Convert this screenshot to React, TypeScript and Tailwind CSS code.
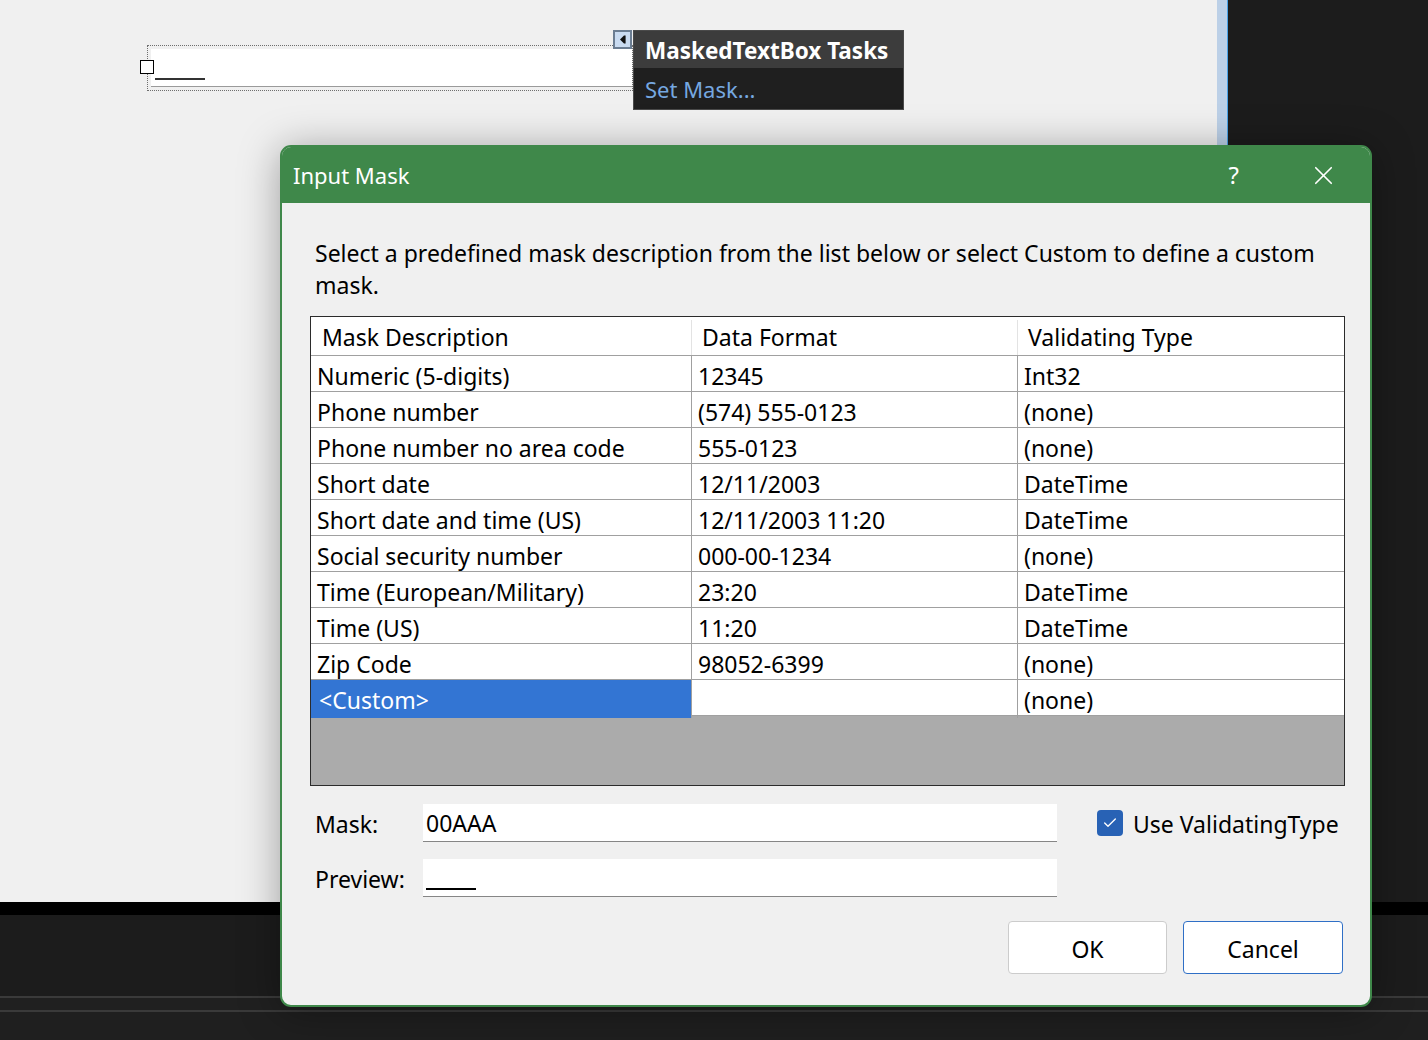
import { X, Check } from "lucide-react";

const font = { fontFamily: '"Noto Sans", "Open Sans", sans-serif' };

type Row = { desc: string; format: string; type: string; selected?: boolean };

const rows: Row[] = [
  { desc: "Numeric (5-digits)", format: "12345", type: "Int32" },
  { desc: "Phone number", format: "(574) 555-0123", type: "(none)" },
  { desc: "Phone number no area code", format: "555-0123", type: "(none)" },
  { desc: "Short date", format: "12/11/2003", type: "DateTime" },
  { desc: "Short date and time (US)", format: "12/11/2003 11:20", type: "DateTime" },
  { desc: "Social security number", format: "000-00-1234", type: "(none)" },
  { desc: "Time (European/Military)", format: "23:20", type: "DateTime" },
  { desc: "Time (US)", format: "11:20", type: "DateTime" },
  { desc: "Zip Code", format: "98052-6399", type: "(none)" },
  { desc: "<Custom>", format: "", type: "(none)", selected: true },
];

const SmartTagGlyph = () => (
  <svg width="19" height="19" viewBox="0 0 19 19">
    <rect x="1" y="1" width="17" height="17" fill="#c9dbf1" stroke="#6b7d92" strokeWidth="2" />
    <path d="M7 9.5 L11 5.5 L11 13.5 Z" fill="#111" />
    <rect x="11" y="5.5" width="1.6" height="8" fill="#111" />
  </svg>
);

const Designer = () => (
  <div className="relative w-[1217px] bg-[#f0f0f0]">
    {/* masked textbox control on the form */}
    <div className="absolute left-[147px] top-[45px] h-[46px] w-[486px] border border-dotted border-[#6e6e6e] py-[3px] pl-[3px]">
      <div className="flex h-full items-end border-b border-[#9a9a9a] bg-white pb-[6px] pl-[4px]">
        <div className="h-[2px] w-[50px] bg-[#333]" />
      </div>
    </div>
    <div className="absolute left-[140px] top-[60px] h-[14px] w-[14px] border border-black bg-white" />
    <div className="absolute left-[613px] top-[30px]">
      <SmartTagGlyph />
    </div>
    {/* smart tag panel */}
    <div
      className="absolute left-[633px] top-[30px] w-[271px] border border-[#4a4a4a] bg-[#1f1f1f]"
      style={font}
    >
      <div className="flex h-[37px] items-center bg-[#3c3c3c] pl-[11px] pt-[2px] text-[22.5px] font-bold text-white">
        MaskedTextBox Tasks
      </div>
      <div className="flex h-[41px] items-center pl-[11px] pt-[2px] text-[22px] text-[#76a8e0]">
        Set Mask...
      </div>
    </div>
  </div>
);

const Field = ({ label, children }: { label: string; children: React.ReactNode }) => (
  <div className="flex items-center">
    <span className="w-[113px] pl-[5px] pt-[2px] text-[23px] text-black">{label}</span>
    <div className="flex h-[38px] w-[634px] items-center border-b border-[#868686] bg-white pl-[3px] pt-[2px] text-[23px] text-black">
      {children}
    </div>
  </div>
);

const MaskTable = () => (
  <div className="flex h-[470px] flex-col border border-[#2b2b2b] bg-[#ababab] text-[23px] text-black">
    <div className="grid h-[39px] shrink-0 grid-cols-[381px_326px_1fr] border-b border-[#a0a0a0] bg-white pt-[3px]">
      <div className="flex items-center border-r border-[#e3e3e3] pl-[11px]">Mask Description</div>
      <div className="flex items-center border-r border-[#e3e3e3] pl-[10px]">Data Format</div>
      <div className="flex items-center pl-[10px]">Validating Type</div>
    </div>
    {rows.map((r) => (
      <div
        key={r.desc}
        className="grid h-[36px] shrink-0 grid-cols-[381px_326px_1fr] border-b border-[#a0a0a0] bg-white"
      >
        <div
          className={
            r.selected
              ? "flex items-center border-r border-[#a0a0a0] bg-[#3375d3] pl-[8px] pt-[3px] text-white"
              : "flex items-center border-r border-[#a0a0a0] pl-[6px] pt-[3px]"
          }
        >
          {r.desc}
        </div>
        <div className="flex items-center border-r border-[#a0a0a0] pl-[6px] pt-[3px]">{r.format}</div>
        <div className="flex items-center pl-[6px] pt-[3px]">{r.type}</div>
      </div>
    ))}
  </div>
);

const InputMaskDialog = () => (
  <div
    className="absolute left-[280px] top-[145px] flex h-[862px] w-[1092px] flex-col overflow-hidden rounded-[11px] border-2 border-[#3f884a] bg-[#f0f0f0] shadow-[0_4px_40px_rgba(0,0,0,0.35)]"
    style={font}
  >
    <div className="flex h-[56px] shrink-0 items-center bg-[#3f884a] pl-[11px] text-white">
      <span className="text-[22px]">Input Mask</span>
      <span className="ml-auto mr-[69px] text-[24px]">?</span>
      <X className="mr-[31px] h-[31px] w-[31px]" strokeWidth={1.3} />
    </div>
    <div className="flex flex-1 flex-col pl-[28px] pr-[25px] pt-[34px]">
      <p className="whitespace-nowrap pl-[5px] text-[23px] leading-[32px] text-black">
        Select a predefined mask description from the list below or select Custom to define a custom
        <br />
        mask.
      </p>
      <div className="mt-[15px]">
        <MaskTable />
      </div>
      <div className="mt-[18px] flex">
        <div className="flex flex-col gap-[17px]">
          <Field label="Mask:">00AAA</Field>
          <Field label="Preview:">
            <div className="mt-[20px] h-[2px] w-[50px] bg-black" />
          </Field>
        </div>
        <label className="ml-[40px] mt-[4px] flex h-[30px] items-center gap-[10px] pt-[2px] text-[23px] text-black">
          <span className="-mt-[2px] flex h-[26px] w-[26px] items-center justify-center rounded-[4px] bg-[#2862b5]">
            <Check className="h-[16px] w-[16px] text-white" strokeWidth={2} />
          </span>
          Use ValidatingType
        </label>
      </div>
      <div className="mt-[24px] flex justify-end gap-[16px] pr-[2px]">
        <button className="h-[53px] w-[159px] rounded-[4px] border border-[#cccccc] bg-white pt-[3px] text-[23px] text-black">
          OK
        </button>
        <button className="h-[53px] w-[160px] rounded-[4px] border border-[#2f6fc6] bg-white pt-[3px] text-[23px] text-black">
          Cancel
        </button>
      </div>
    </div>
  </div>
);

export default function App() {
  return (
    <div className="relative flex h-[1040px] w-[1428px] flex-col overflow-hidden bg-[#1c1c1c]">
      <div className="flex h-[902px] shrink-0">
        <Designer />
        <div className="w-[11px] border-r border-[#4aa3e8] bg-[#bcd0e7]" />
        <div className="flex-1 bg-[#1c1c1c]" />
      </div>
      <div className="h-[13px] shrink-0 bg-black" />
      <div className="h-[81px] shrink-0 bg-[#1c1c1c]" />
      <div className="h-[2px] shrink-0 bg-[#3a3a3a]" />
      <div className="h-[12px] shrink-0 bg-[#202020]" />
      <div className="h-[2px] shrink-0 bg-[#3a3a3a]" />
      <div className="flex-1 bg-[#1f1f1f]" />
      <InputMaskDialog />
    </div>
  );
}
